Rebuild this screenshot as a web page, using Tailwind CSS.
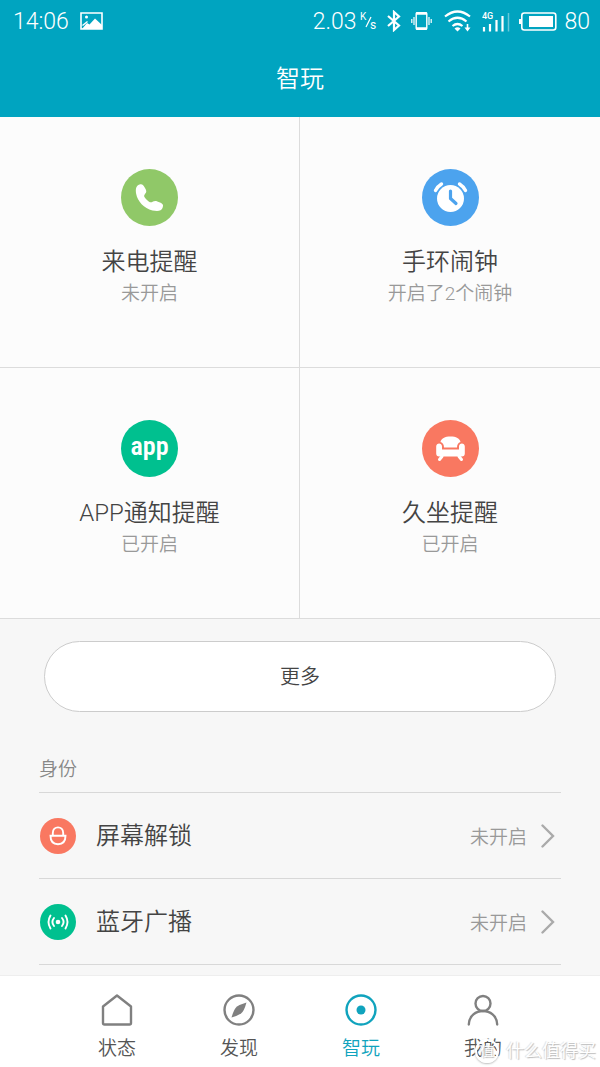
<!DOCTYPE html>
<html lang="zh-CN">
<head>
<meta charset="utf-8">
<meta name="viewport" content="width=device-width, initial-scale=1">
<title>智玩</title>
<script src="https://cdn.jsdelivr.net/npm/@tailwindcss/browser@4"></script>
</head>
<body class="flex min-h-screen flex-col bg-[#f7f7f7] font-['Roboto','Noto_Sans_CJK_SC',sans-serif] font-[350] text-[#444]">
<header class="bg-[#00a4c0] text-white">
  <div class="flex h-[42px] items-center justify-between pr-[10px] pl-[13px] text-[23px] leading-none font-light">
    <div class="flex items-center gap-[11px]">
      <span>14:06</span>
      <svg class="h-[18px] w-[23px]" viewBox="0 0 23 18" role="img" aria-label="图片"><path d="M1 1H22V17H1Z" fill="none" stroke="#fff" stroke-width="1.6"/><path d="M2 17 7 11 9.5 12.5 15 6.500 22 13V17Z" fill="#fff"/><path d="M2.500 13.500 7.500 9.500" stroke="#fff" stroke-width="1.500"/><circle cx="6.500" cy="5" r="1.500" fill="#fff"/></svg>
    </div>
    <div class="flex items-center">
      <span>2.03</span>
      <svg class="ml-1 h-5 w-[18px]" viewBox="0 0 18 20" fill="#fff" font-family="Roboto" font-weight="400" role="img" aria-label="K/s"><text x="0" y="9" font-size="10">K</text><path d="M6 16 11 6" stroke="#fff" stroke-width="1.200"/><text x="10" y="18" font-size="12">s</text></svg>
      <svg class="ml-[9px] h-[22px] w-[14px]" viewBox="0 0 14 22" fill="none" stroke="#fff" stroke-width="2.200" role="img" aria-label="蓝牙"><path d="M1 6 12 15.500 7 20V2L12 6.500 1 16"/></svg>
      <svg class="ml-[10px] h-5 w-[21px]" viewBox="0 0 21 20" fill="none" stroke="#fff" role="img" aria-label="振动"><rect x="5.200" y="1.700" width="10.600" height="16.600" rx="1" stroke-width="1.400"/><path d="M5 2.500H16M5 17.500H16" stroke-width="2.400"/><path d="M3 6V14M18 6V14M.8 8V12M20.200 8V12" stroke-width="1.200"/></svg>
      <svg class="ml-3 h-[22px] w-[27px]" viewBox="0 0 27 22" fill="none" stroke="#fff" stroke-width="2.200" role="img" aria-label="Wi-Fi"><path d="M1 6.500Q13.500-3.500 26 6.500M4.500 11.500Q13.500 4 22.500 11.500M8.500 16Q13.500 12 18.500 16"/><path d="M10.500 18.500Q13.500 16 16.500 18.500L13.500 21.500Z" fill="#fff" stroke="none"/><path d="M23.500 14V19" stroke-width="1.600"/><path d="M20.500 17.500H26.500L23.500 21.500Z" fill="#fff" stroke="none"/></svg>
      <svg class="ml-[11px] h-[21px] w-7" viewBox="0 0 28 21" fill="none" stroke="#fff" stroke-width="2.200" role="img" aria-label="4G"><text x="0" y="8" font-family="Roboto" font-size="9" font-weight="500" fill="#fff" stroke="none">4G</text><path d="M2 16V20.500M8 13V20.500M14.500 9V20.500M20.500 5V20.500"/><path d="M26.500 2V20.500" stroke-width="1.500" opacity=".4"/></svg>
      <svg class="ml-[9px] h-[19px] w-[38px]" viewBox="0 0 38 19" role="img" aria-label="电池"><rect x="2.800" y="1" width="34" height="17" rx="2.500" fill="none" stroke="#fff" stroke-width="1.600"/><path d="M0 7H2.500V12H0ZM10 4H34V15H10Z" fill="#fff"/></svg>
      <span class="ml-[7px]">80</span>
    </div>
  </div>
  <h1 class="flex h-[75px] items-center justify-center pb-[2px] text-2xl font-[350]">智玩</h1>
</header>
<main class="flex-1">
  <section class="grid grid-cols-2 bg-[#fcfcfc]" aria-label="提醒">
    <button type="button" class="flex flex-col items-center border-r border-b border-[#dcdcdc] pt-[52px] pb-[57px]">
      <svg class="size-[57px]" viewBox="0 0 57 57" aria-hidden="true"><circle cx="28.500" cy="28.500" r="28.500" fill="#90c868"/><path d="M18.500 15.500C21 14.500 22.500 16 24 19 25.500 21.500 26 23 24 25 22.500 27 23 28 26 31 28.500 33.500 30 34 32 32.500 34 31.500 36 32 39 33.500 42.500 35 42.500 36.500 41.500 39 40.500 42 37 42.500 31.500 41.500 23 39.500 16.500 32 15.200 25 14.400 20 15 16.500 18.500 15.500Z" fill="#fff"/></svg>
      <span class="mt-5 text-2xl">来电提醒</span>
      <span class="text-[19px] leading-8 text-[#999]">未开启</span>
    </button>
    <button type="button" class="flex flex-col items-center border-b border-[#dcdcdc] pt-[52px] pb-[57px]">
      <svg class="size-[57px]" viewBox="0 0 57 57" fill="none" stroke-linecap="round" aria-hidden="true"><circle cx="28.500" cy="28.500" r="28.500" fill="#4ca3ee"/><circle cx="28.500" cy="29.500" r="13.500" fill="#fff"/><path d="M28.500 22V29.500L34 34.500" stroke="#4ca3ee" stroke-width="3.200" stroke-linejoin="round"/><path d="M13.500 21.500Q15.500 17.500 19.500 15M43.500 21.500Q41.500 17.500 37.500 15" stroke="#fff" stroke-width="3.400"/></svg>
      <span class="mt-5 text-2xl">手环闹钟</span>
      <span class="text-[19px] leading-8 text-[#999]">开启了2个闹钟</span>
    </button>
    <button type="button" class="flex flex-col items-center border-r border-b border-[#dcdcdc] pt-[52px] pb-[57px]">
      <svg class="size-[57px]" viewBox="0 0 57 57" aria-hidden="true"><circle cx="28.500" cy="28.500" r="28.500" fill="#00c08f"/><text x="28.500" y="35" text-anchor="middle" font-family="'Roboto Condensed','Liberation Sans Narrow',Roboto" font-size="26" font-weight="600" fill="#fff">app</text></svg>
      <span class="mt-5 text-2xl">APP通知提醒</span>
      <span class="text-[19px] leading-8 text-[#999]">已开启</span>
    </button>
    <button type="button" class="flex flex-col items-center border-b border-[#dcdcdc] pt-[52px] pb-[57px]">
      <svg class="size-[57px]" viewBox="0 0 57 57" fill="#fff" aria-hidden="true"><circle cx="28.500" cy="28.500" r="28.500" fill="#f97861"/><path d="M18.500 22C19 18.500 23 16.500 28.500 16.500S38 18.500 38.500 22Q35 23 35 27.500H22Q22 23 18.500 22Z"/><path d="M14.200 26.500C14.200 22.500 20 22.500 20 26.500V29.500H37V26.500C37 22.500 42.800 22.500 42.800 26.500V33.500Q42.800 36.500 39.800 36.500H17.200Q14.200 36.500 14.200 33.500Z"/><path d="M20 36.500 17.500 39.500M37 36.500 39.500 39.500" stroke="#fff" stroke-width="3" stroke-linecap="round"/></svg>
      <span class="mt-5 text-2xl">久坐提醒</span>
      <span class="text-[19px] leading-8 text-[#999]">已开启</span>
    </button>
  </section>
  <div class="px-11 pt-[22px]">
    <button type="button" class="h-[71px] w-full rounded-full border border-[#ccc] bg-white text-xl text-[#444]">更多</button>
  </div>
  <section class="mx-[39px] mt-11">
    <h2 class="h-9 text-[19px] leading-7 font-[350] text-[#888]">身份</h2>
    <ul class="border-t border-[#d8d8d8]">
      <li class="border-b border-[#d8d8d8]">
        <a href="#unlock" class="flex h-[85px] items-center px-px">
          <svg class="size-9" viewBox="0 0 36 36" fill="none" stroke="#fff" stroke-width="1.900" aria-hidden="true"><circle cx="18" cy="18" r="18" fill="#f97861" stroke="none"/><path d="M10.500 17.800H25.500C25.500 23.500 22.500 26.200 18 26.200S10.500 23.500 10.500 17.800ZM12.800 17.500V15C12.800 7.500 23.200 7.500 23.200 15V17.500"/></svg>
          <span class="ml-5 text-2xl">屏幕解锁</span>
          <span class="ml-auto pt-1 text-[19px] leading-8 text-[#999]">未开启</span>
          <svg class="mr-[5px] ml-[14px] h-6 w-[14px]" viewBox="0 0 14 24" fill="none" stroke="#aaa" stroke-width="2.400" stroke-linecap="round" aria-hidden="true"><path d="M1.500 1.500 12 12 1.500 22.500"/></svg>
        </a>
      </li>
      <li class="border-b border-[#d8d8d8]">
        <a href="#broadcast" class="flex h-[85px] items-center px-px">
          <svg class="size-9" viewBox="0 0 36 36" fill="none" stroke="#fff" stroke-width="1.900" stroke-linecap="round" aria-hidden="true"><circle cx="18" cy="18" r="18" fill="#00c08f" stroke="none"/><circle cx="18" cy="18" r="2.300" fill="#fff" stroke="none"/><path d="M14 14Q10.800 18 14 22M22 14Q25.200 18 22 22M10.500 11.500Q6.500 18 10.500 24.500M25.500 11.500Q29.500 18 25.500 24.500"/></svg>
          <span class="ml-5 text-2xl">蓝牙广播</span>
          <span class="ml-auto pt-1 text-[19px] leading-8 text-[#999]">未开启</span>
          <svg class="mr-[5px] ml-[14px] h-6 w-[14px]" viewBox="0 0 14 24" fill="none" stroke="#aaa" stroke-width="2.400" stroke-linecap="round" aria-hidden="true"><path d="M1.500 1.500 12 12 1.500 22.500"/></svg>
        </a>
      </li>
    </ul>
  </section>
</main>
<footer class="relative border-t border-[#eee] bg-white">
  <nav class="grid h-[91px] grid-cols-4 px-14 text-[19px] leading-7 text-[#555]" aria-label="主导航">
    <a href="#status" class="flex flex-col items-center pt-[17px]">
      <svg class="size-[34px]" viewBox="0 0 34 34" fill="none" stroke="#808080" stroke-width="2.400" stroke-linejoin="round" aria-hidden="true"><path d="M17 2.500 31 13.500V30Q31 31.500 29.500 31.500H4.500Q3 31.500 3 30V13.500Z"/></svg>
      <span class="mt-2">状态</span>
    </a>
    <a href="#discover" class="flex flex-col items-center pt-[17px]">
      <svg class="size-[34px]" viewBox="0 0 34 34" aria-hidden="true"><circle cx="17" cy="17" r="14.500" fill="none" stroke="#808080" stroke-width="2.400"/><path d="M24.500 9.500Q22 18.500 19 20.500T9.500 24.500Q12 15.500 15 13.500T24.500 9.500Z" fill="#808080"/></svg>
      <span class="mt-2">发现</span>
    </a>
    <a href="#play" aria-current="page" class="flex flex-col items-center pt-[17px] text-[#10a3bd]">
      <svg class="size-[34px]" viewBox="0 0 34 34" aria-hidden="true"><circle cx="17" cy="17" r="14.500" fill="none" stroke="#10a3bd" stroke-width="2.400"/><circle cx="17" cy="17" r="4.500" fill="#10a3bd"/></svg>
      <span class="mt-2">智玩</span>
    </a>
    <a href="#me" class="flex flex-col items-center pt-[17px]">
      <svg class="size-[34px]" viewBox="0 0 34 34" fill="none" stroke="#808080" stroke-width="2.400" stroke-linecap="round" aria-hidden="true"><circle cx="17" cy="10.500" r="7.500"/><path d="M2.800 31.500C3.500 13.500 30.500 13.500 31.200 31.500"/></svg>
      <span class="mt-2">我的</span>
    </a>
  </nav>
  <div class="absolute right-1 bottom-[2px] flex items-center gap-[7px] text-[18px] leading-7 text-white [text-shadow:1px_1px_1px_#bbb,-1px_0_1px_#ddd]">
    <span class="flex size-6 items-center justify-center rounded-full border-2 border-white text-sm shadow-[0_1px_2px_#bbb]">值</span>
    <span>什么值得买</span>
  </div>
</footer>
</body>
</html>
